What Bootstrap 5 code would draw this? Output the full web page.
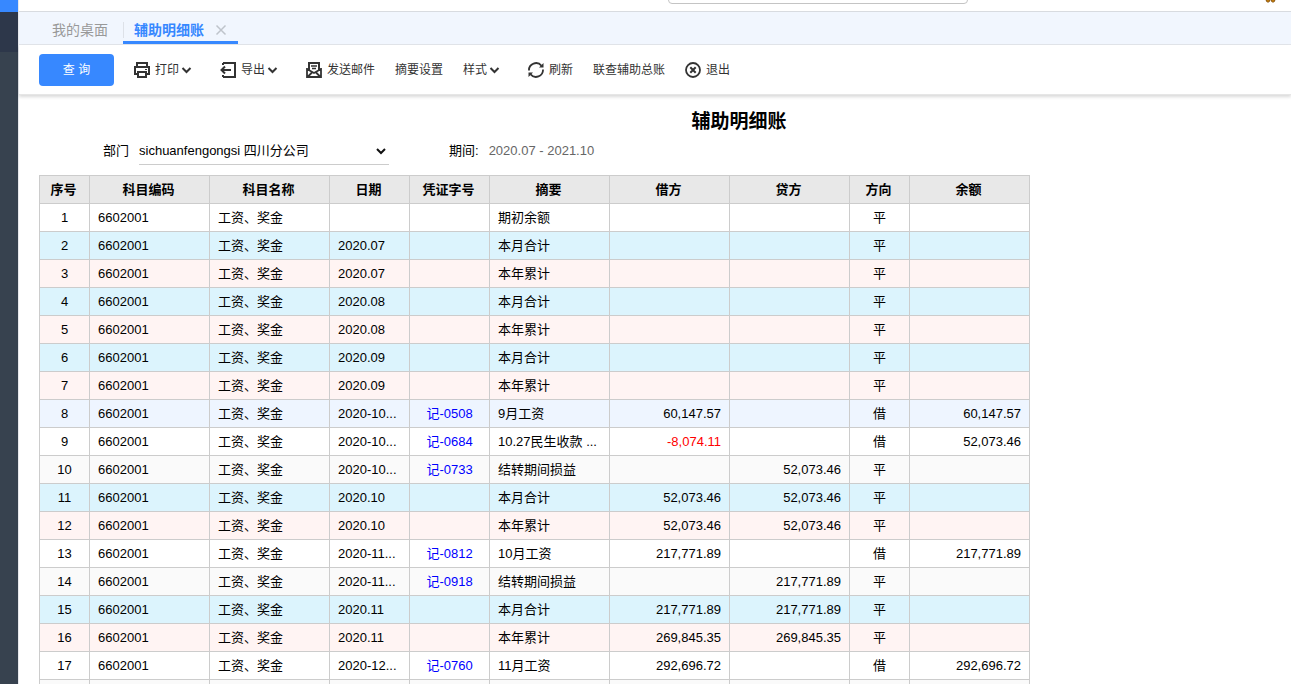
<!DOCTYPE html>
<html lang="zh-CN">
<head>
<meta charset="utf-8">
<meta name="viewport" content="width=device-width, initial-scale=1">
<title>辅助明细账</title>
<link href="https://cdn.jsdelivr.net/npm/bootstrap@5.3.0/dist/css/bootstrap.min.css" rel="stylesheet">
<style>
body { font-family: "Liberation Sans", "Noto Sans CJK SC", sans-serif; font-size: 13px; line-height: 20px; color: #000; }
button, select, input { font-family: inherit; }
.side-rail { width: 18px; background: #37424f; }
.rail-brand { height: 12px; background: #3788ff; }
.rail-menu { height: 40px; background: #2d374a; }
.workspace { min-width: 0; border-left: 1px solid #e6e8ec; }
.top-strip { height: 12px; border-bottom: 1px solid #d8dbe0; padding: 0 14px 7px 649px; }
.top-search { width: 300px; height: 32px; border: 1px solid #c4c4c4; border-radius: 4px; }
.tab-strip { height: 33px; background: #f1f6fe; border-bottom: 1px solid #e2e5ea; padding-left: 19px; font-size: 14px; }
.tab-strip .nav-link { height: 32px; padding: 4px 0 0; color: #999; }
.tab-home { width: 85px; }
.tab-strip .nav-link.tab-home { padding-left: 14px; padding-right: 14px; }
.tab-open { width: 115px; border-bottom: 3px solid #3788ff; }
.tab-open .nav-link { color: #3788ff; font-weight: 700; padding: 6px 0 0 11px; height: 29px; }
.tab-split { width: 1px; height: 16px; background: #dde1e8; margin-top: 10px; margin-right: -1px; }
.tab-close { width: 12px; height: 12px; margin: 12px 11px 0 0; }
.tool-strip { height: 50px; gap: 20px; padding: 0 20px; border-bottom: 1px solid #e6e6e6; box-shadow: 0 2px 3px rgba(0,0,0,.15); }
.btn-query { width: 75px; height: 32px; background: #3788ff; color: #fff; font-size: 12px; border-radius: 4px; padding: 0; }
.btn-query:hover { background: #2376f0; color: #fff; }
.btn-tool { font-size: 12px; line-height: 18px; color: #333; border: 0; padding: 0; border-radius: 0; white-space: nowrap; }
.tool-icon { width: 16px; height: 16px; margin-right: 5px; }
.tool-caret { width: 11px; height: 8px; margin: 0 8px 0 2px; }
.sheet { padding: 13px 20px 0; }
.sheet-title { font-size: 19px; line-height: 28px; font-weight: 700; padding-left: 168px; margin: 0; }
.filters { padding: 1px 0 10px 64px; }
.filters .form-select { width: 250px; height: 28px; padding: 0; margin-left: 10px; font-size: 13px; line-height: 20px; color: #000; border: 0; border-bottom: 1px solid #ccc; border-radius: 0;
  background-image: url("data:image/svg+xml,%3Csvg xmlns='http://www.w3.org/2000/svg' viewBox='0 0 10 8'%3E%3Cpath d='M1 2l4 4 4-4' fill='none' stroke='%23111' stroke-width='2'/%3E%3C/svg%3E"); background-size: 10px 8px; background-position: right 3px center; }
.period { margin-left: 60px; }
.period-value { color: #666; margin-left: 10px; }
.ledger { width: 991px; table-layout: fixed; border-collapse: collapse; }
.ledger th, .ledger td { height: 28px; padding: 0 8px; border: 1px solid #ccc; white-space: nowrap; overflow: hidden; text-overflow: ellipsis; line-height: 20px; }
.ledger th { background: #e8e8e8; text-align: center; padding-right: 10px; }
.ledger td:nth-child(1), .ledger td:nth-child(5), .ledger td:nth-child(9) { text-align: center; }
.ledger td:nth-child(7), .ledger td:nth-child(8), .ledger td:nth-child(10) { text-align: right; }
.ledger a { color: #00f; text-decoration: none; }
.sum-month { background: #dcf4fd; }
.sum-year { background: #fff4f3; }
.row-hover { background: #eef5ff; }
.row-alt { background: #fafafa; }
.negative { color: #f00; }
.c50 { width: 50px; } .c60 { width: 60px; } .c80 { width: 80px; } .c120 { width: 120px; }
</style>
</head>
<body>
<div class="d-flex vh-100 overflow-hidden">
  <aside class="side-rail flex-shrink-0">
    <div class="rail-brand"></div>
    <div class="rail-menu"></div>
  </aside>
  <main class="workspace flex-grow-1 d-flex flex-column">
    <header class="top-strip d-flex align-items-end justify-content-between overflow-hidden flex-shrink-0">
      <input class="top-search" type="text" aria-label="搜索">
      <svg class="align-self-start" width="12" height="3" viewBox="0 0 12 3" aria-hidden="true"><path d="M1 0h4l-1 2H2zM6 0h4L9 2H7z" fill="#f0a010" stroke="#75450c" stroke-width=".8"/></svg>
    </header>
    <nav class="tab-strip nav flex-nowrap flex-shrink-0">
      <a class="nav-link tab-home d-flex align-items-center" href="#">我的桌面</a>
      <span class="tab-split"></span>
      <div class="tab-open d-flex justify-content-between">
        <a class="nav-link d-flex align-items-center" href="#">辅助明细账</a>
        <button class="tab-close btn p-0 border-0 d-flex" type="button" aria-label="关闭"><svg width="12" height="12" viewBox="0 0 12 12" fill="none" stroke="#bfc4cb" stroke-width="1.500"><path d="M1.500 1.500l9 9M10.500 1.500l-9 9"/></svg></button>
      </div>
    </nav>
    <div class="tool-strip d-flex align-items-center flex-shrink-0">
      <button class="btn btn-query" type="button">查 询</button>
      <button class="btn btn-tool d-flex align-items-center" type="button">
        <svg class="tool-icon" viewBox="0 0 16 16" fill="none" stroke="#333" stroke-width="2"><path d="M3 5V1h10v4M3 12H1V5h14v7h-2"/><path d="M4 10h8v5H4z"/><path d="M11 7.500h2" stroke-width="1"/></svg>打印<svg class="tool-caret" viewBox="0 0 11 8" fill="none" stroke="#333" stroke-width="2"><path d="M1.500 2l4 4 4-4"/></svg></button>
      <button class="btn btn-tool d-flex align-items-center" type="button">
        <svg class="tool-icon" viewBox="0 0 16 16" fill="none" stroke="#333" stroke-width="2"><path d="M3 1h12v14H3M3 1v2M3 15v-2M1 8h10M5 4.500L1.500 8 5 11.500"/></svg>导出<svg class="tool-caret" viewBox="0 0 11 8" fill="none" stroke="#333" stroke-width="2"><path d="M1.500 2l4 4 4-4"/></svg></button>
      <button class="btn btn-tool d-flex align-items-center" type="button">
        <svg class="tool-icon" viewBox="0 0 16 16" fill="none" stroke="#333" stroke-width="2"><path d="M3 8V1h10v7"/><path d="M1 6v9h14V6M1 7l7 4 7-4M1.500 15L6 10.500M14.500 15L10 10.500" stroke-width="1.800"/><path d="M5 4h6M6 6.500h4" stroke-width="1.300"/></svg>发送邮件</button>
      <button class="btn btn-tool" type="button">摘要设置</button>
      <button class="btn btn-tool d-flex align-items-center" type="button">样式<svg class="tool-caret" viewBox="0 0 11 8" fill="none" stroke="#333" stroke-width="2"><path d="M1.500 2l4 4 4-4"/></svg></button>
      <button class="btn btn-tool d-flex align-items-center" type="button">
        <svg class="tool-icon" viewBox="0 0 16 16" fill="none" stroke="#333" stroke-width="1.800"><path d="M1 8.500A7 7 0 0 1 13.500 3.800M15 7.500A7 7 0 0 1 2.500 12.200"/><path d="M15.500 1v4.500H11zM.5 15v-4.500H5z" fill="#333" stroke="none"/></svg>刷新</button>
      <button class="btn btn-tool" type="button">联查辅助总账</button>
      <button class="btn btn-tool d-flex align-items-center" type="button">
        <svg class="tool-icon" viewBox="0 0 16 16" fill="none" stroke="#333" stroke-width="1.800"><circle cx="8" cy="8" r="7"/><path d="M5.300 5.300l5.400 5.400M10.700 5.300l-5.400 5.400" stroke-width="2"/></svg>退出</button>
    </div>
    <section class="sheet flex-grow-1 overflow-hidden">
      <h1 class="sheet-title text-center">辅助明细账</h1>
      <div class="filters d-flex align-items-center">
        <label for="dept">部门</label>
        <select class="form-select" id="dept"><option>sichuanfengongsi 四川分公司</option></select>
        <span class="period">期间:</span><span class="period-value">2020.07 - 2021.10</span>
      </div>
      <table class="ledger">
        <colgroup><col class="c50"><col class="c120"><col class="c120"><col class="c80"><col class="c80"><col class="c120"><col class="c120"><col class="c120"><col class="c60"><col class="c120"></colgroup>
        <thead><tr><th>序号</th><th>科目编码</th><th>科目名称</th><th>日期</th><th>凭证字号</th><th>摘要</th><th>借方</th><th>贷方</th><th>方向</th><th>余额</th></tr></thead>
        <tbody>
          <tr><td>1</td><td>6602001</td><td>工资、奖金</td><td></td><td></td><td>期初余额</td><td></td><td></td><td>平</td><td></td></tr>
          <tr class="sum-month"><td>2</td><td>6602001</td><td>工资、奖金</td><td>2020.07</td><td></td><td>本月合计</td><td></td><td></td><td>平</td><td></td></tr>
          <tr class="sum-year"><td>3</td><td>6602001</td><td>工资、奖金</td><td>2020.07</td><td></td><td>本年累计</td><td></td><td></td><td>平</td><td></td></tr>
          <tr class="sum-month"><td>4</td><td>6602001</td><td>工资、奖金</td><td>2020.08</td><td></td><td>本月合计</td><td></td><td></td><td>平</td><td></td></tr>
          <tr class="sum-year"><td>5</td><td>6602001</td><td>工资、奖金</td><td>2020.08</td><td></td><td>本年累计</td><td></td><td></td><td>平</td><td></td></tr>
          <tr class="sum-month"><td>6</td><td>6602001</td><td>工资、奖金</td><td>2020.09</td><td></td><td>本月合计</td><td></td><td></td><td>平</td><td></td></tr>
          <tr class="sum-year"><td>7</td><td>6602001</td><td>工资、奖金</td><td>2020.09</td><td></td><td>本年累计</td><td></td><td></td><td>平</td><td></td></tr>
          <tr class="row-hover"><td>8</td><td>6602001</td><td>工资、奖金</td><td>2020-10...</td><td><a href="#">记-0508</a></td><td>9月工资</td><td>60,147.57</td><td></td><td>借</td><td>60,147.57</td></tr>
          <tr><td>9</td><td>6602001</td><td>工资、奖金</td><td>2020-10...</td><td><a href="#">记-0684</a></td><td>10.27民生收款 ...</td><td class="negative">-8,074.11</td><td></td><td>借</td><td>52,073.46</td></tr>
          <tr class="row-alt"><td>10</td><td>6602001</td><td>工资、奖金</td><td>2020-10...</td><td><a href="#">记-0733</a></td><td>结转期间损益</td><td></td><td>52,073.46</td><td>平</td><td></td></tr>
          <tr class="sum-month"><td>11</td><td>6602001</td><td>工资、奖金</td><td>2020.10</td><td></td><td>本月合计</td><td>52,073.46</td><td>52,073.46</td><td>平</td><td></td></tr>
          <tr class="sum-year"><td>12</td><td>6602001</td><td>工资、奖金</td><td>2020.10</td><td></td><td>本年累计</td><td>52,073.46</td><td>52,073.46</td><td>平</td><td></td></tr>
          <tr><td>13</td><td>6602001</td><td>工资、奖金</td><td>2020-11...</td><td><a href="#">记-0812</a></td><td>10月工资</td><td>217,771.89</td><td></td><td>借</td><td>217,771.89</td></tr>
          <tr class="row-alt"><td>14</td><td>6602001</td><td>工资、奖金</td><td>2020-11...</td><td><a href="#">记-0918</a></td><td>结转期间损益</td><td></td><td>217,771.89</td><td>平</td><td></td></tr>
          <tr class="sum-month"><td>15</td><td>6602001</td><td>工资、奖金</td><td>2020.11</td><td></td><td>本月合计</td><td>217,771.89</td><td>217,771.89</td><td>平</td><td></td></tr>
          <tr class="sum-year"><td>16</td><td>6602001</td><td>工资、奖金</td><td>2020.11</td><td></td><td>本年累计</td><td>269,845.35</td><td>269,845.35</td><td>平</td><td></td></tr>
          <tr><td>17</td><td>6602001</td><td>工资、奖金</td><td>2020-12...</td><td><a href="#">记-0760</a></td><td>11月工资</td><td>292,696.72</td><td></td><td>借</td><td>292,696.72</td></tr>
          <tr class="row-alt"><td></td><td></td><td></td><td></td><td></td><td></td><td></td><td></td><td></td><td></td></tr>
        </tbody>
      </table>
    </section>
  </main>
</div>
<script src="https://cdn.jsdelivr.net/npm/bootstrap@5.3.0/dist/js/bootstrap.bundle.min.js"></script>
</body>
</html>
